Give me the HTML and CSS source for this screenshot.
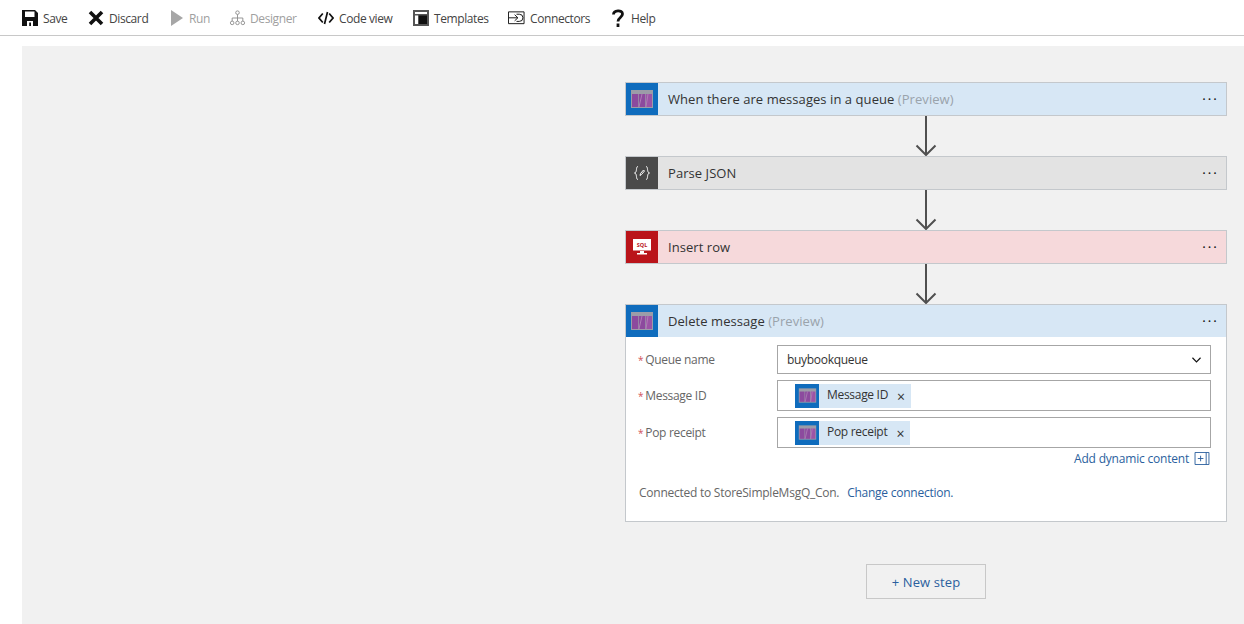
FILE: index.html
```html
<!DOCTYPE html>
<html lang="en">
<head>
    <meta charset="UTF-8">
    <title>Logic Apps Designer</title>
    <link rel="stylesheet" href="styles.css">
</head>
<body>
    <svg class="sprites" width="0" height="0">
        <symbol id="queue" viewBox="0 0 24 24">
            <rect x="1" y="3" width="22" height="18" fill="#9c9ca8"/>
            <rect x="2" y="7" width="6.3" height="13" fill="#8c4a9e"/>
            <rect x="9" y="7" width="6.3" height="13" fill="#8c4a9e"/>
            <rect x="16" y="7" width="6" height="13" fill="#9c54a6"/>
            <path d="M9 20l3-13M16 20l2-13" stroke="#b07cb8" stroke-width="1"/>
        </symbol>
    </svg>

    <nav class="toolbar">
        <div class="tool">
            <svg class="tool-icon" viewBox="0 0 16 16"><path fill="#111" d="M0 0h13l3 3v13H0z"/><path fill="#fff" d="M3 1.500h9.500V7H3zM5 11h6v5H5z"/><path fill="#111" d="M7.200 12.500H9V16H7.200z"/></svg>
            <span>Save</span>
        </div>
        <div class="tool">
            <svg class="tool-icon" viewBox="0 0 16 16"><path d="M2 2l12 12M14 2L2 14" stroke="#111" stroke-width="3.600" fill="none"/></svg>
            <span>Discard</span>
        </div>
        <div class="tool tool-off">
            <svg class="tool-icon run" viewBox="0 0 13 16"><path fill="#a6a6a6" d="M0 0l12 8-12 8z"/></svg>
            <span>Run</span>
        </div>
        <div class="tool tool-off tool-tight">
            <svg class="tool-icon wide" viewBox="0 0 18 18" fill="none" stroke="#8a8a8a"><circle cx="9" cy="3" r="2"/><circle cx="3" cy="14.500" r="2"/><circle cx="9" cy="14.500" r="2"/><circle cx="15" cy="14.500" r="2"/><path d="M9 5v7.500M3 12.500V9h12v3.500"/></svg>
            <span>Designer</span>
        </div>
        <div class="tool">
            <svg class="tool-icon" viewBox="0 0 16 16" fill="none" stroke="#111" stroke-width="1.700"><path d="M4.800 3.500L1 8l3.800 4.500M11.200 3.500L15 8l-3.800 4.500M9.500 2L6.500 14"/></svg>
            <span>Code view</span>
        </div>
        <div class="tool">
            <svg class="tool-icon" viewBox="0 0 16 16"><path fill="#555" d="M0 0h16v16H0z"/><path fill="#fff" d="M2 2h12v2H2zM2 5.500h3V14H2z"/><path fill="#111" d="M6 5.500h8V14H6z"/></svg>
            <span>Templates</span>
        </div>
        <div class="tool">
            <svg class="tool-icon wide" viewBox="0 0 18 14" fill="none" stroke="#111"><path d="M.5.500h16.500v12.500H.500zM1 6.800h9M7 3.500l3.500 3.300L7 10M9 3h3a3.800 3.800 0 0 1 0 7.600H9"/></svg>
            <span>Connectors</span>
        </div>
        <div class="tool">
            <svg class="tool-icon help" viewBox="0 0 12 18" fill="none" stroke="#111" stroke-width="2.800"><path d="M1.500 5.500C1.500 1 10.500 .5 10.500 5c0 3.500-4.500 3.500-4.500 7.500"/><path d="M6 14.500V18"/></svg>
            <span>Help</span>
        </div>
    </nav>

    <main class="canvas">
        <div class="flow">
            <div class="step step-queue">
                <div class="step-head">
                    <div class="step-icon"><svg class="queue-icon" viewBox="0 0 24 24"><use href="#queue"/></svg></div>
                    <div class="step-title">When there are messages in a queue <span class="preview">(Preview)</span></div>
                    <div class="dots">•••</div>
                </div>
            </div>
            <svg class="arrow" viewBox="0 0 22 40" fill="none" stroke="#505050" stroke-width="2"><path d="M11 0v39M1.500 29.500L11 39l9.500-9.500"/></svg>

            <div class="step step-json">
                <div class="step-head">
                    <div class="step-icon">
                        <svg class="json-icon" viewBox="0 0 18 18" fill="none" stroke="#fff"><path d="M5 2.500C2.500 2.500 4.500 8.500 1.500 9 4.500 9.500 2.500 15.500 5 15.500M13 2.500c2.500 0 .5 6 3.500 6.500-3 .5-1 6.500-3.500 6.500M7 11.500l.5-2L10.500 6l1 1-3 3.500z"/></svg>
                    </div>
                    <div class="step-title">Parse JSON</div>
                    <div class="dots">•••</div>
                </div>
            </div>
            <svg class="arrow" viewBox="0 0 22 40" fill="none" stroke="#505050" stroke-width="2"><path d="M11 0v39M1.500 29.500L11 39l9.500-9.500"/></svg>

            <div class="step step-sql">
                <div class="step-head">
                    <div class="step-icon">
                        <svg class="sql-icon" viewBox="0 0 18 16"><path fill="#fff" d="M0 0h18v11.500H0zM7 12h4v2h3v1.500H4V14h3z"/><text x="9" y="8" class="sql-label">SQL</text></svg>
                    </div>
                    <div class="step-title">Insert row</div>
                    <div class="dots">•••</div>
                </div>
            </div>
            <svg class="arrow" viewBox="0 0 22 40" fill="none" stroke="#505050" stroke-width="2"><path d="M11 0v39M1.500 29.500L11 39l9.500-9.500"/></svg>

            <div class="step step-queue step-open">
                <div class="step-head">
                    <div class="step-icon"><svg class="queue-icon" viewBox="0 0 24 24"><use href="#queue"/></svg></div>
                    <div class="step-title">Delete message <span class="preview">(Preview)</span></div>
                    <div class="dots">•••</div>
                </div>
                <div class="step-body">
                    <div class="field first-field">
                        <label class="field-label"><i>*</i>Queue name</label>
                        <div class="input select">
                            <span>buybookqueue</span>
                            <svg class="chevron" viewBox="0 0 10 6" fill="none" stroke="#111" stroke-width="1.300"><path d="M.5.500L5 5 9.500.500"/></svg>
                        </div>
                    </div>
                    <div class="field">
                        <label class="field-label"><i>*</i>Message ID</label>
                        <div class="input tall">
                            <div class="token">
                                <div class="token-icon"><svg class="token-queue" viewBox="0 0 24 24"><use href="#queue"/></svg></div>
                                <span class="token-text">Message ID</span>
                                <span class="token-x">×</span>
                            </div>
                        </div>
                    </div>
                    <div class="field">
                        <label class="field-label"><i>*</i>Pop receipt</label>
                        <div class="input tall">
                            <div class="token">
                                <div class="token-icon"><svg class="token-queue" viewBox="0 0 24 24"><use href="#queue"/></svg></div>
                                <span class="token-text">Pop receipt</span>
                                <span class="token-x">×</span>
                            </div>
                        </div>
                    </div>
                    <div class="dynamic">
                        <span>Add dynamic content</span>
                        <svg class="plus-box" viewBox="0 0 16 14" fill="none" stroke="#2b5f9e"><path d="M.5.500h15v13H.500zM12.500 .500v13M3.500 7h6M6.500 4v6"/></svg>
                    </div>
                    <div class="connection">
                        <span>Connected to StoreSimpleMsgQ_Con.</span>
                        <a class="change" href="#">Change connection.</a>
                    </div>
                </div>
            </div>

            <button class="new-step">+ New step</button>
        </div>
    </main>
</body>
</html>
```

FILE: styles.css
```css
body {
    margin: 0;
    height: 624px;
    overflow: hidden;
    background-color: #ffffff;
    font-family: "Open Sans", "Noto Sans", sans-serif;
    font-size: 12px;
    color: #333333;
}
.sprites {
    position: absolute;
}

/* top bar */
.toolbar {
    display: grid;
    grid-template-columns: 66px 83px 58px 89px 95px 95px 104px auto;
    align-items: center;
    height: 34px;
    padding: 1px 0 0 22px;
    border-bottom: 1px solid #c8c8c8;
}
.tool {
    display: flex;
    align-items: center;
    gap: 5px;
    color: #444444;
    letter-spacing: -0.4px;
}
.tool-off {
    color: #a0a0a0;
}
.tool-tight {
    gap: 4px;
}
.tool-icon {
    width: 16px;
    height: 16px;
}
.tool-icon.run {
    width: 13px;
}
.tool-icon.wide {
    width: 17px;
}
.tool-icon.help {
    width: 12px;
    height: 18px;
    margin-right: 2px;
}

/* canvas */
.canvas {
    margin: 10px 0 0 22px;
    height: 578px;
    background-color: #f1f1f1;
}
.flow {
    display: flex;
    flex-direction: column;
    align-items: center;
    width: 602px;
    margin-left: 603px;
    padding-top: 36px;
}
.arrow {
    display: block;
    width: 22px;
    height: 40px;
}

/* cards */
.step {
    width: 100%;
    box-sizing: border-box;
    border: 1px solid #c4c8cc;
}
.step-head {
    display: flex;
    align-items: center;
    height: 32px;
}
.step-icon {
    display: flex;
    align-items: center;
    justify-content: center;
    width: 32px;
    height: 32px;
    flex-shrink: 0;
}
.step-title {
    flex: 1;
    margin-left: 10px;
    font-size: 13px;
    color: #333333;
    letter-spacing: 0.06px;
}
.preview {
    color: #9aa3ab;
}
.dots {
    margin: 0 7px 2px 0;
    font-size: 8px;
    letter-spacing: 2.5px;
    color: #222222;
}
.step-queue .step-head {
    background-color: #d7e7f5;
}
.step-queue .step-icon {
    background-color: #0f6cbd;
}
.step-json .step-head {
    background-color: #e3e3e3;
}
.step-json .step-icon {
    background-color: #4a4a4a;
}
.step-sql .step-head {
    background-color: #f6d9db;
}
.step-sql .step-icon {
    background-color: #ba141a;
}
.queue-icon {
    width: 24px;
    height: 24px;
}
.json-icon {
    width: 18px;
    height: 18px;
}
.sql-icon {
    width: 18px;
    height: 16px;
}
.sql-label {
    font-size: 5.500px;
    font-weight: 700;
    text-anchor: middle;
    fill: #ba141a;
}

/* expanded card */
.step-open {
    height: 218px;
    background-color: #ffffff;
}
.step-body {
    padding: 0 15px 0 12px;
}
.field {
    display: flex;
    align-items: center;
    margin-top: 6px;
}
.first-field {
    margin-top: 8px;
}
.field-label {
    width: 139px;
    color: #666666;
    letter-spacing: -0.3px;
}
.field-label i {
    font-style: normal;
    font-size: 10px;
    color: #d0525a;
    margin-right: 2px;
}
.input {
    flex: 1;
    display: flex;
    align-items: center;
    justify-content: space-between;
    box-sizing: border-box;
    height: 29px;
    padding: 0 9px;
    border: 1px solid #a6a6a6;
    background-color: #ffffff;
    color: #333333;
    letter-spacing: -0.3px;
}
.input.tall {
    height: 31px;
    padding-left: 17px;
    justify-content: flex-start;
}
.chevron {
    width: 9px;
    height: 6px;
}
.token {
    display: flex;
    align-items: center;
    height: 24px;
    background-color: #d7e7f5;
}
.token-icon {
    display: flex;
    align-items: center;
    justify-content: center;
    width: 24px;
    height: 24px;
    background-color: #0f6cbd;
}
.token-queue {
    width: 19px;
    height: 19px;
}
.token-text {
    margin-left: 8px;
    padding-bottom: 2px;
}
.token-x {
    margin: 2px 6px 0 9px;
    font-size: 14px;
    line-height: 1;
}
.dynamic {
    display: flex;
    justify-content: flex-end;
    align-items: center;
    gap: 5px;
    margin-top: 2px;
    padding-right: 1px;
    color: #2b5f9e;
    letter-spacing: -0.2px;
}
.plus-box {
    width: 16px;
    height: 13px;
}
.connection {
    margin-top: 17px;
    padding-left: 1px;
    color: #666666;
    letter-spacing: -0.25px;
}
.change {
    margin-left: 5px;
    color: #2b5f9e;
    text-decoration: none;
}
.new-step {
    width: 120px;
    height: 35px;
    margin-top: 42px;
    border: 1px solid #c8c8c8;
    background-color: #f1f1f1;
    color: #2b5f9e;
    font-family: inherit;
    font-size: 13px;
    letter-spacing: 0.1px;
}
```
